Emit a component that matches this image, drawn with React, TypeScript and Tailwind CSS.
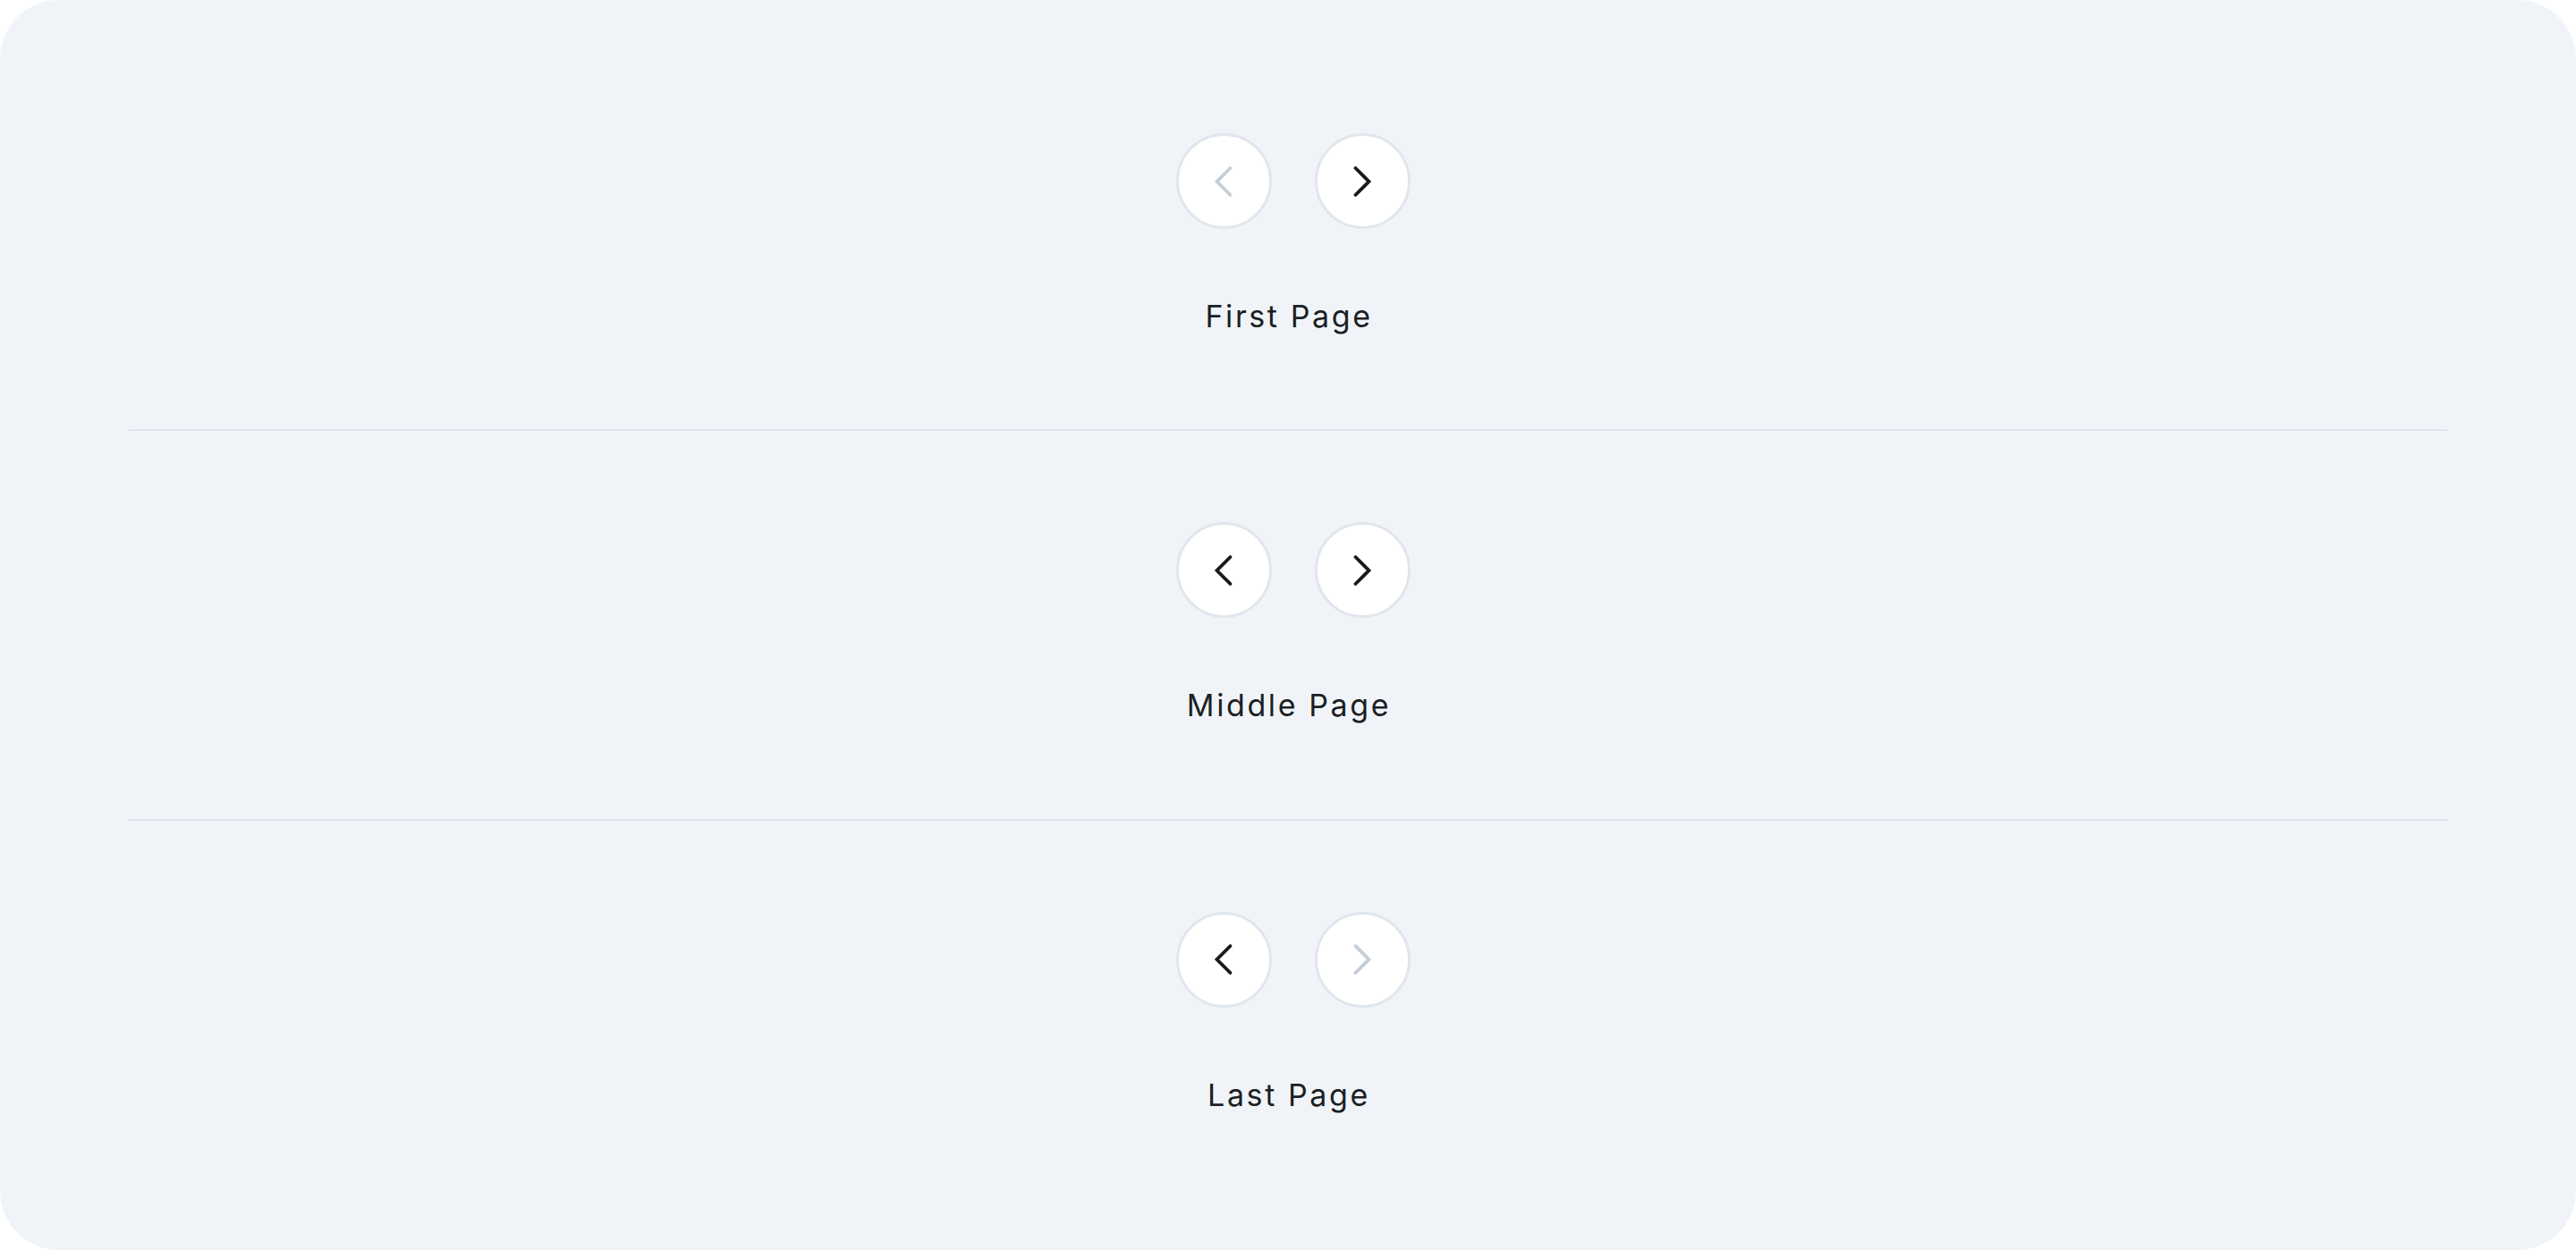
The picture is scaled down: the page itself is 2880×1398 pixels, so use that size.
import React from "react";

function Chevron({ dir, disabled }: { dir: "left" | "right"; disabled?: boolean }) {
  return (
    <svg
      width="48"
      height="48"
      viewBox="0 0 24 24"
      fill="none"
      stroke="currentColor"
      strokeWidth={1.9}
      strokeLinecap="round"
      strokeLinejoin="miter"
      className={disabled ? "text-[#c5ced8]" : "text-[#161a1f]"}
    >
      {dir === "left" ? (
        <path d="M15.75 19.5 8.25 12l7.5-7.5" />
      ) : (
        <path d="M8.25 4.5l7.5 7.5-7.5 7.5" />
      )}
    </svg>
  );
}

function NavButton({ dir, disabled }: { dir: "left" | "right"; disabled?: boolean }) {
  return (
    <button
      type="button"
      disabled={disabled}
      className="flex h-[107px] w-[107px] items-center justify-center rounded-full border-[3px] border-[#e1e6ec] bg-white"
    >
      <Chevron dir={dir} disabled={disabled} />
    </button>
  );
}

function Section({ label, prevDisabled, nextDisabled }: { label: string; prevDisabled?: boolean; nextDisabled?: boolean }) {
  return (
    <div className="flex flex-1 flex-col items-center justify-center">
      <div className="flex items-center gap-[48px] pl-[11px]">
        <NavButton dir="left" disabled={prevDisabled} />
        <NavButton dir="right" disabled={nextDisabled} />
      </div>
      <div
        className="mt-[74px] pl-[2px] text-[34px] leading-[48px] tracking-[2.6px] text-[#1c1f24]"
        style={{ fontFamily: "Inter, 'Noto Sans', sans-serif" }}
      >
        {label}
      </div>
    </div>
  );
}

export default function App() {
  return (
    <div className="min-h-[1398px] w-full bg-white">
      <div className="flex h-[1398px] w-full flex-col rounded-[66px] bg-[#f0f4f8] px-[144px] py-[47px]">
        <Section label="First Page" prevDisabled />
        <div className="h-[2px] w-full bg-[#dfe4ea]" />
        <Section label="Middle Page" />
        <div className="h-[2px] w-full bg-[#dfe4ea]" />
        <Section label="Last Page" nextDisabled />
      </div>
    </div>
  );
}
